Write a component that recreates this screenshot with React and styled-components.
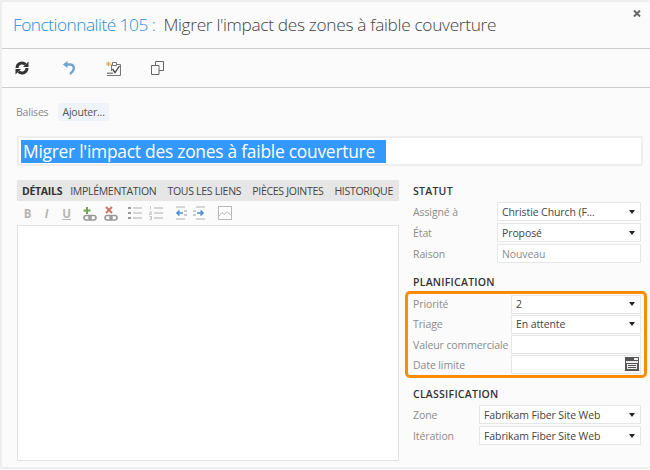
import styled, { createGlobalStyle } from "styled-components";

const Global = createGlobalStyle`
  html, body { margin: 0; padding: 0; background: #ffffff; }
  body { font-family: "Open Sans", "Noto Sans", sans-serif; }
`;

const Dialog = styled.div`
  box-sizing: border-box;
  width: 650px;
  height: 469px;
  background: #fbfbfb;
  border: 2px solid #eeeeee;
  border-right: 0;
  border-radius: 2px;
  position: relative;
  display: flex;
  flex-direction: column;
`;

const Header = styled.div`
  height: 47px;
  box-sizing: border-box;
  border-bottom: 1px solid #cccccc;
  padding: 0 0 2px 11px;
  display: flex;
  align-items: center;
  font-size: 17.3px;
  font-weight: 300;
  color: #444444;
  letter-spacing: -0.32px;
  white-space: nowrap;
`;

const WorkItem = styled.span`
  color: #1f8fd8;
  margin-right: 8px;
  letter-spacing: -0.5px;
`;

const Close = styled.svg`
  position: absolute;
  top: 8px;
  right: 9px;
`;

const Toolbar = styled.div`
  height: 39px;
  box-sizing: border-box;
  border-bottom: 1px solid #cccccc;
  padding-left: 13px;
  display: flex;
  align-items: center;
  gap: 30px;
`;

const ToolIcon = styled.svg`
  margin-left: ${(p) => p.$shift || 0}px;
  flex: none;
`;

const Tags = styled.div`
  display: flex;
  align-items: center;
  height: 20px;
  margin: 14px 0 0 14px;
  font-size: 10.5px;
  letter-spacing: -0.2px;
`;

const TagLabel = styled.span`
  color: #888888;
  margin-right: 10px;
`;

const TagButton = styled.span`
  background: #eff4fa;
  color: #555555;
  height: 18px;
  line-height: 18px;
  padding: 0 4px;
`;

const TitleBox = styled.div`
  box-sizing: border-box;
  height: 30px;
  width: 626px;
  margin: 14px 0 0 15px;
  background: #ffffff;
  border: 2px solid #eeeeee;
  padding: 2px;
  display: flex;
`;

const Selected = styled.span`
  background: #3399ff;
  color: #ffffff;
  font-size: 17.4px;
  line-height: 23px;
  height: 23px;
  padding: 0 11px 0 2px;
  letter-spacing: -0.25px;
  white-space: nowrap;
`;

const Body = styled.div`
  display: flex;
  margin: 14px 0 0 15px;
`;

const Left = styled.div`
  width: 382px;
  display: flex;
  flex-direction: column;
`;

const Tabs = styled.div`
  height: 21px;
  background: #e6e6e6;
  display: flex;
  align-items: center;
  padding-left: 5px;
  gap: 11px;
  font-size: 10.5px;
  letter-spacing: -0.29px;
  white-space: nowrap;
`;

const Tab = styled.span`
  font-weight: ${(p) => (p.$active ? 700 : 400)};
  color: ${(p) => (p.$active ? "#333333" : "#444444")};
  margin-right: ${(p) => (p.$active ? -3 : 0)}px;
`;

const Format = styled.div`
  height: 24px;
  display: flex;
  align-items: center;
  padding-left: 6px;
`;

const FormatIcon = styled.svg`
  margin-right: ${(p) => p.$gap || 0}px;
  flex: none;
`;

const Letter = styled.span`
  width: 9px;
  margin-right: ${(p) => p.$gap}px;
  color: #b5b5b5;
  font-size: 11.5px;
  font-weight: 700;
  font-style: ${(p) => (p.$italic ? "italic" : "normal")};
  text-decoration: ${(p) => (p.$under ? "underline" : "none")};
  text-align: center;
`;

const Editor = styled.div`
  height: 236px;
  box-sizing: border-box;
  background: #ffffff;
  border: 1px solid #e2e2e2;
`;

const Right = styled.div`
  width: 228px;
  margin: 2px 0 0 14px;
  display: flex;
  flex-direction: column;
`;

const Heading = styled.div`
  height: 18px;
  line-height: 18px;
  font-size: 10.5px;
  font-weight: 600;
  color: #333333;
  letter-spacing: 0.25px;
  margin-top: ${(p) => p.$before || 0}px;
  margin-bottom: ${(p) => p.$after || 0}px;
`;

const Highlight = styled.div`
  box-sizing: border-box;
  width: 242px;
  height: 87px;
  margin: 0 -14px 0 -8px;
  border: 3px solid #ff8c00;
  border-radius: 5px;
  padding-left: 5px;
  display: flex;
  flex-direction: column;
`;

const Row = styled.div`
  height: 21px;
  display: flex;
  align-items: center;
  font-size: 10.5px;
  letter-spacing: -0.1px;
  width: 228px;
`;

const Label = styled.span`
  width: ${(p) => p.$w}px;
  flex: none;
  color: #8c8c8c;
  white-space: nowrap;
`;

const Field = styled.div`
  flex: 1;
  box-sizing: border-box;
  height: 19px;
  background: #ffffff;
  border: 1px solid #e6e6e6;
  display: flex;
  align-items: center;
  justify-content: space-between;
  padding: 0 5px 0 4px;
  color: ${(p) => (p.$muted ? "#8c8c8c" : "#444444")};
  position: relative;
`;

const Caret = styled.span`
  width: 0;
  height: 0;
  border-left: 3.5px solid transparent;
  border-right: 3.5px solid transparent;
  border-top: 4px solid #222222;
`;

const CalendarIcon = styled.svg`
  position: absolute;
  right: 0;
  top: 0;
`;

function Select({ label, value, w }) {
  return (
    <Row>
      <Label $w={w}>{label}</Label>
      <Field>
        {value}
        <Caret />
      </Field>
    </Row>
  );
}

const RefreshIcon = () => (
  <ToolIcon width="14" height="14" viewBox="0 0 14 14" fill="none">
    <path d="M2 7a5 5 0 0 1 8.400-3.600" stroke="#333" strokeWidth="3" />
    <path d="M12 7a5 5 0 0 1-8.400 3.600" stroke="#333" strokeWidth="3" />
    <path d="M8 6h5.500V.5z" fill="#333" />
    <path d="M6 8H.5v5.500z" fill="#333" />
  </ToolIcon>
);

const UndoIcon = () => (
  <ToolIcon width="14" height="14" viewBox="0 0 14 14" fill="none" $shift={3}>
    <path d="M3.500 3.500h5a3.600 3.600 0 0 1 3.200 4.600c-.5 1.800-2 3.500-3.700 5" stroke="#6fa3d0" strokeWidth="2.400" />
    <path d="M5.500 0L.8 3.500l4.700 3.600z" fill="#6fa3d0" />
  </ToolIcon>
);

const TemplateIcon = () => (
  <ToolIcon width="15" height="15" viewBox="0 0 15 15" fill="none">
    <path d="M5.500 3.500V10M11 3.500h3.500V14.500H1" stroke="#777" strokeWidth="1" />
    <path d="M6.500 1.500h4v3h-4z" fill="#fff" stroke="#777" />
    <path d="M6.500 8l2.500 3.500L13.500 5" stroke="#444" strokeWidth="1.300" />
    <path d="M1 11.500h6V13H1z" fill="#888" />
    <path d="M2.500 .5v5M0 3h5M.8 1.200l3.400 3.500M4.200 1.200L.8 4.700" stroke="#e8a33c" strokeWidth=".9" />
  </ToolIcon>
);

const CopyIcon = () => (
  <ToolIcon width="13" height="14" viewBox="0 0 13 14" fill="none" stroke="#666">
    <path d="M.5 4.500h7.500v9H.5z" />
    <path d="M4.500 4.500V.5h8v9H8" />
  </ToolIcon>
);

const LinkShape = () => (
  <g>
    <rect x="1" y="9.500" width="7" height="4.500" rx="2.200" stroke="#999" strokeWidth="1.600" fill="none" />
    <rect x="6" y="9.500" width="7" height="4.500" rx="2.200" stroke="#999" strokeWidth="1.600" fill="none" />
  </g>
);

const Picture = () => (
  <FormatIcon width="14" height="14" viewBox="0 0 14 14" fill="none">
    <rect x=".5" y=".5" width="13" height="13" fill="#fff" stroke="#b8b8b8" />
    <path d="M1 10l3-3.500 2.500 2L9 5.500l4 4" stroke="#b8b8b8" />
  </FormatIcon>
);

const BulletList = () => (
  <FormatIcon width="14" height="14" viewBox="0 0 14 14" $gap={7}>
    {[2, 7, 12].map((y) => (
      <g key={y}>
        <rect x="0" y={y - 1} width="3" height="2" fill="#999" />
        <rect x="5" y={y - 0.5} width="9" height="1" fill="#b0b0b0" />
      </g>
    ))}
  </FormatIcon>
);

const NumberedList = () => (
  <FormatIcon width="14" height="14" viewBox="0 0 14 14" fill="none" $gap={10}>
    <path d="M1.500 0v3.500M.5 6h2v1.300h-2v1.200h2M.5 10.500h2v3h-2M1 12h1.500" stroke="#b8b8b8" strokeWidth=".8" />
    {[2, 7, 12].map((y) => (
      <rect key={y} x="5" y={y - 0.5} width="9" height="1" fill="#b0b0b0" />
    ))}
  </FormatIcon>
);

const Indent = ({ flip }) => (
  <FormatIcon width="14" height="14" viewBox="0 0 14 14" $gap={flip ? 11 : 6}>
    <path d="M3 1h9M3 13h9" stroke="#b0b0b0" />
    <path d={flip ? "M0 5h3M0 9h3" : "M11 5h3M11 9h3"} stroke="#999" />
    <path
      d={flip ? "M4 7h6M7.500 4.500L10 7l-2.500 2.500" : "M10 7H4M6.500 4.500L4 7l2.500 2.500"}
      stroke="#4a90d0"
      strokeWidth="1.600"
      fill="none"
    />
  </FormatIcon>
);

export default function App() {
  return (
    <>
      <Global />
      <Dialog>
        <Close width="8" height="7" viewBox="0 0 8 7">
          <path d="M1 .5l6 6M7 .5l-6 6" stroke="#666" strokeWidth="2" />
        </Close>
        <Header>
          <WorkItem>Fonctionnalité 105 :</WorkItem>
          Migrer l'impact des zones à faible couverture
        </Header>
        <Toolbar>
          <RefreshIcon />
          <UndoIcon />
          <TemplateIcon />
          <CopyIcon />
        </Toolbar>
        <Tags>
          <TagLabel>Balises</TagLabel>
          <TagButton>Ajouter...</TagButton>
        </Tags>
        <TitleBox>
          <Selected>Migrer l'impact des zones à faible couverture</Selected>
        </TitleBox>
        <Body>
          <Left>
            <Tabs>
              <Tab $active>DÉTAILS</Tab>
              <Tab>IMPLÉMENTATION</Tab>
              <Tab>TOUS LES LIENS</Tab>
              <Tab>PIÈCES JOINTES</Tab>
              <Tab>HISTORIQUE</Tab>
            </Tabs>
            <Format>
              <Letter $gap={10}>B</Letter>
              <Letter $gap={11} $italic>I</Letter>
              <Letter $gap={12} $under>U</Letter>
              <FormatIcon width="15" height="15" viewBox="0 0 15 15" fill="none" $gap={6}>
                <path d="M4 1v7M.5 4.500h7" stroke="#6aa84f" strokeWidth="2" />
                <LinkShape />
              </FormatIcon>
              <FormatIcon width="15" height="15" viewBox="0 0 15 15" fill="none" $gap={9}>
                <path d="M2 1l6 6M8 1L2 7" stroke="#d0705a" strokeWidth="1.800" />
                <LinkShape />
              </FormatIcon>
              <BulletList />
              <NumberedList />
              <Indent />
              <Indent flip />
              <Picture />
            </Format>
            <Editor />
          </Left>
          <Right>
            <Heading $after={1}>STATUT</Heading>
            <Select label="Assigné à" value="Christie Church (F..." w={84} />
            <Select label="État" value="Proposé" w={84} />
            <Row>
              <Label $w={84}>Raison</Label>
              <Field $muted>Nouveau</Field>
            </Row>
            <Heading $before={9}>PLANIFICATION</Heading>
            <Highlight>
              <Select label="Priorité" value="2" w={98} />
              <Select label="Triage" value="En attente" w={98} />
              <Row>
                <Label $w={98}>Valeur commerciale</Label>
                <Field />
              </Row>
              <Row>
                <Label $w={98}>Date limite</Label>
                <Field>
                  <CalendarIcon width="16" height="16" viewBox="0 0 16 16">
                    <path d="M1 1h14v14H1z" fill="#555" />
                    <path d="M10 2h4v2h-4zM2 5h12v2H2zM3 8h10v5H3z" fill="#eee" />
                    <path d="M4 9.500h8M4 11.500h8" stroke="#555" />
                  </CalendarIcon>
                </Field>
              </Row>
            </Highlight>
            <Heading $before={7} $after={1}>CLASSIFICATION</Heading>
            <Select label="Zone" value="Fabrikam Fiber Site Web" w={66} />
            <Select label="Itération" value="Fabrikam Fiber Site Web" w={66} />
          </Right>
        </Body>
      </Dialog>
    </>
  );
}
